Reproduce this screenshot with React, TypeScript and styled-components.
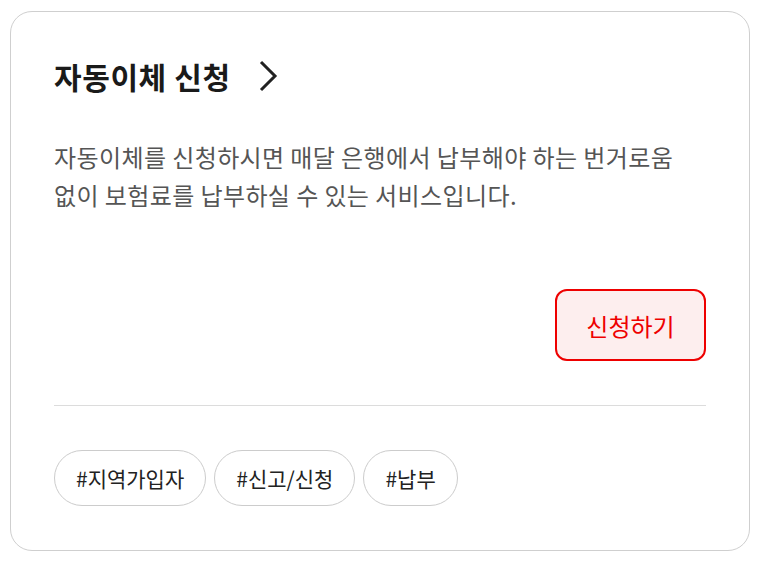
import React from "react";
import styled, { createGlobalStyle } from "styled-components";

const GlobalStyle = createGlobalStyle`
  html, body {
    margin: 0;
    padding: 0;
    background: #fff;
  }
  body {
    font-family: "Noto Sans CJK KR", "Noto Sans", sans-serif;
  }
`;

const tags = ["#지역가입자", "#신고/신청", "#납부"];

const App = () => {
  return (
    <Page>
      <GlobalStyle />
      <Card>
        <TitleRow>
          <Title>자동이체 신청</Title>
          <svg width="22" height="32" viewBox="0 0 22 32" fill="none">
            <path d="M4 2 L18 16 L4 30" stroke="#222" strokeWidth="3" />
          </svg>
        </TitleRow>
        <Desc>
          자동이체를 신청하시면 매달 은행에서 납부해야 하는 번거로움
          <br />
          없이 보험료를 납부하실 수 있는 서비스입니다.
        </Desc>
        <Actions>
          <ApplyButton>신청하기</ApplyButton>
        </Actions>
        <Divider />
        <Tags>
          {tags.map((t) => (
            <Tag key={t}>{t}</Tag>
          ))}
        </Tags>
      </Card>
    </Page>
  );
};

export default App;

const Page = styled.div`
  width: 759px;
  height: 561px;
  padding: 11px 9px 10px 10px;
  box-sizing: border-box;
`;

const Card = styled.div`
  height: 100%;
  box-sizing: border-box;
  border: 1px solid #cfcfcf;
  border-radius: 22px;
  padding: 44px 43px 0 43px;
  display: flex;
  flex-direction: column;
`;

const TitleRow = styled.div`
  display: flex;
  align-items: center;
  gap: 26px;
  height: 40px;
`;

const Title = styled.div`
  font-size: 30px;
  font-weight: 700;
  color: #1a1a1a;
  letter-spacing: 0.6px;
`;

const Desc = styled.p`
  margin: 42px 0 0;
  font-size: 24px;
  line-height: 38px;
  color: #555;
  letter-spacing: 0.4px;
  white-space: nowrap;
`;

const Actions = styled.div`
  display: flex;
  justify-content: flex-end;
  margin-top: 75px;
`;

const ApplyButton = styled.button`
  width: 151px;
  height: 72px;
  border: 2px solid #ee0000;
  border-radius: 12px;
  background: #fdeeee;
  color: #ee0000;
  font-family: "Noto Sans CJK KR", sans-serif;
  font-size: 24px;
  cursor: pointer;
`;

const Divider = styled.div`
  height: 1px;
  background: #dcdcdc;
  margin-top: 44px;
`;

const Tags = styled.div`
  display: flex;
  gap: 8px;
  margin-top: 44px;
`;

const Tag = styled.div`
  height: 56px;
  box-sizing: border-box;
  display: flex;
  align-items: center;
  padding: 0 21px;
  border: 1px solid #cccccc;
  border-radius: 28px;
  font-size: 21px;
  color: #222;
`;
